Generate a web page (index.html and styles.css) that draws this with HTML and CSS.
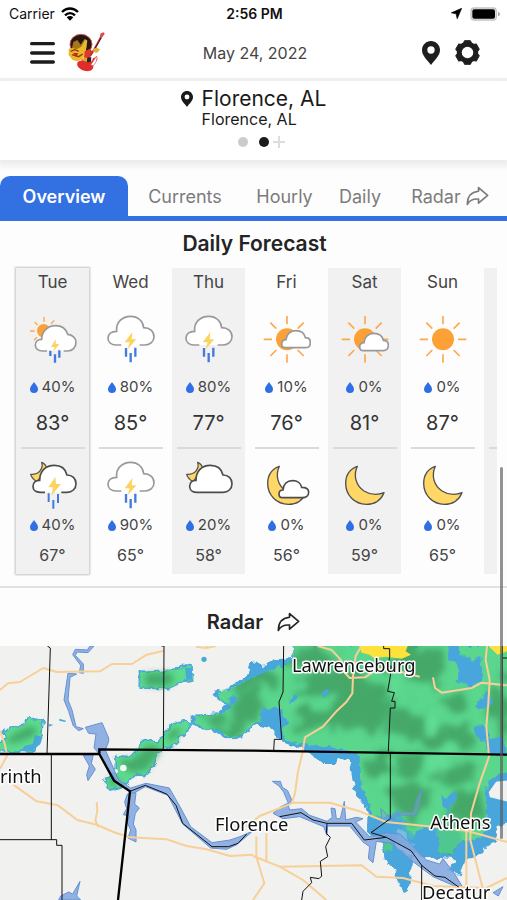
FILE: index.html
```html
<!DOCTYPE html>
<html lang="en">
<head>
<meta charset="utf-8">
<meta name="viewport" content="width=device-width, initial-scale=1">
<title>Weather</title>
<link rel="stylesheet" href="styles.css">
</head>
<body>
<svg class="defs" aria-hidden="true">
  <symbol id="drop" viewBox="0 0 24 33"><path d="M12 0C15 6 24 13 24 21a12 12 0 0 1-24 0C0 13 9 6 12 0z" fill="#2f6fe6"/></symbol>
  <symbol id="share" viewBox="0 0 68 58"><path d="M37 4 64 27 37 50V38C22 37 10 42 4 54 4 32 15 17 37 15z" fill="none" stroke="currentColor" stroke-width="5" stroke-linejoin="round"/></symbol>
  <symbol id="pin" viewBox="0 0 54 72"><path fill-rule="evenodd" d="M27 0C12 0 0 12 0 27c0 18 17 30 27 45 10-15 27-27 27-45C54 12 42 0 27 0zm0 16a11 11 0 1 1 0 22 11 11 0 0 1 0-22z" fill="currentColor"/></symbol>
  <symbol id="sun" viewBox="0 0 144 144">
    <circle cx="72" cy="73" r="33" fill="#fda136"/>
    <path d="M72 3v25M72 118v25M2 73h25M117 73h25M22 23l18 18M104 105l18 18M122 23l-18 18M40 105l-18 18" stroke="#fda850" stroke-width="5" fill="none"/>
  </symbol>
  <symbol id="sun-cloud" viewBox="0 0 144 144">
    <use href="#sun"/>
    <path d="M68 98C60 98 56 93 56 87c0-8 5-13 13-13C70 58 82 47 99 47c14 0 25 8 28 21 10 0 15 6 15 15 0 9-6 15-15 15z" fill="#fff" stroke="#999" stroke-width="5"/>
  </symbol>
  <symbol id="sun-cloud-low" viewBox="0 0 144 144">
    <use href="#sun"/>
    <path d="M68 107C60 107 56 102 56 96c0-8 5-13 13-13C70 66 82 55 99 55c14 0 25 8 28 21 10 0 15 6 15 15 0 9-6 16-15 16z" fill="#fff" stroke="#999" stroke-width="5"/>
  </symbol>
  <symbol id="storm" viewBox="0 0 144 144">
    <path d="M43 90H27C13 90 3 82 3 70 3 57 13 49 29 49 26 22 46 4 71 4c22 0 37 14 39 34 18 0 31 11 31 27 0 15-12 25-27 25H98" fill="#fff" stroke="#999" stroke-width="5"/>
    <path d="M76 51 53 82h15l-6 21 26-30H74z" fill="#fcd35f"/>
    <path d="M57 99v26M71 114v28M85 98v27" stroke="#437bdc" stroke-width="7"/>
  </symbol>
  <symbol id="sun-storm" viewBox="0 0 144 144">
    <circle cx="44" cy="47" r="20" fill="#fda136"/>
    <path d="M45 6v15M17 21l9 9M3 48h14M15 76l9-9M66 27l10-11" stroke="#fda850" stroke-width="4"/>
    <path d="M54 108H40C28 108 19 101 19 90 19 80 27 73 38 73 38 48 57 32 80 32c19 0 31 10 36 26 14 1 25 11 25 24 0 16-11 26-25 26H104" fill="#fff" stroke="#999" stroke-width="5"/>
    <path d="M80 72 66 96h11l-4 14 18-23H80z" fill="#fcd35f"/>
    <path d="M64 107v16M78 118v25M91 106v22" stroke="#437bdc" stroke-width="7"/>
  </symbol>
  <symbol id="moon-peek" viewBox="0 0 144 144">
    <path d="M38 4C44 22 30 42 5 40 8 50 14 56 24 62L54 24C51 12 46 7 38 4z" fill="#fed766" stroke="#555" stroke-width="4" stroke-linejoin="round"/>
  </symbol>
  <symbol id="moon-storm" viewBox="0 0 144 144">
    <use href="#moon-peek"/>
    <path d="M48 94H34C20 94 12 87 12 76 12 65 20 58 32 58 32 30 50 13 76 13c20 0 34 11 38 29 16 0 27 11 27 26 0 16-12 26-27 26H97" fill="#fff" stroke="#4c4c4c" stroke-width="5"/>
    <path d="M79 48 58 79h14l-5 25 29-35H81z" fill="#fcd35f"/>
    <path d="M59 97v26M73 117v26M87 99v27" stroke="#437bdc" stroke-width="6"/>
  </symbol>
  <symbol id="moon-cloudy" viewBox="0 0 144 144">
    <use href="#moon-peek"/>
    <path d="M34 94C22 94 14 87 14 76 14 65 22 58 33 58 33 30 50 13 76 13c20 0 34 11 38 29 16 0 27 11 27 26 0 16-12 26-27 26z" fill="#fff" stroke="#4c4c4c" stroke-width="5"/>
  </symbol>
  <symbol id="moon" viewBox="0 0 144 144">
    <path d="M49 16C28 22 14 42 14 67c0 36 27 63 62 63 24 0 44-13 53-35C112 102 88 102 69 90 45 74 36 44 49 16z" fill="#fed766" stroke="#505050" stroke-width="4" stroke-linejoin="round"/>
  </symbol>
  <symbol id="moon-cloud" viewBox="0 0 144 144">
    <use href="#moon"/>
    <path d="M58 110C52 110 48 105 48 99c0-7 5-12 12-12 1-17 12-28 29-28 15 0 25 9 27 20 13 0 21 6 21 15 0 10-8 16-19 16z" fill="#fff" stroke="#4c4c4c" stroke-width="5"/>
  </symbol>
</svg>

<div class="status">
  <div class="status-left"><span>Carrier</span>
    <svg class="wifi" viewBox="0 0 54 42" aria-hidden="true"><g fill="none" stroke="#000" stroke-width="7"><path d="M3 15C17 1 37 1 51 15"/><path d="M12 25c9-9 21-9 30 0"/></g><path d="M17 31c6-5 14-5 20 0L27 41z"/></svg>
  </div>
  <time class="clock">2:56 PM</time>
  <div class="status-right">
    <svg class="nav-arrow" viewBox="0 0 32 32" aria-hidden="true"><path d="M31 1 18 31 15 17 1 14z" stroke="#000" stroke-width="2"/></svg>
    <svg class="battery" viewBox="0 0 90 42" aria-hidden="true"><rect x="1" y="1" width="80" height="40" rx="12" fill="#c3c3c3"/><rect x="5" y="5" width="72" height="32" rx="8" fill="#e8e8e8"/><rect x="7" y="7" width="68" height="28" rx="6"/><path d="M84 14c8 3 8 11 0 14z" fill="#aaa"/></svg>
  </div>
</div>

<header class="header">
  <div class="header-side">
    <button class="icon-button" aria-label="Menu"><svg class="menu-icon" viewBox="0 0 75 66"><path d="M5 5h65M5 33h65M5 60h65" stroke="#1c1c1c" stroke-width="10" stroke-linecap="round"/></svg></button>
    <svg class="mascot" viewBox="0 0 111 123" aria-hidden="true">
      <ellipse cx="39" cy="37" rx="33" ry="30" fill="#241815" stroke="#d8504b" stroke-width="3"/>
      <path d="M16 30 28 24l10 14 12-18 4 10 2 16-14 10-30-8z" fill="#a8741c"/>
      <path d="M2 50l14-2 10 4 14-8 12-22 6 4-4 28 2 12-14 16-14 6-14-4-12-14z" fill="#edb72a"/>
      <path d="M8 58l12-5 12 5M12 68l20 6 12-8" fill="none" stroke="#8a3a14" stroke-width="4"/>
      <path d="M15 62l16 2-7 10z" fill="#c92220"/>
      <path d="M50 58l16-8 10 12-12 16-16 4z" fill="#e0362d"/>
      <path d="M38 82l20-6 12 10-18 14z" fill="#dca829"/>
      <path d="M58 76l12 0-2 22-12-4z" fill="#252525"/>
      <path d="M104 6 80 50 66 72" fill="none" stroke="#b83837" stroke-width="6"/>
      <path d="M99 18 82 48" fill="none" stroke="#372123" stroke-width="3"/>
      <path d="M98 4l10-3 2 5-9 11-5-6z" fill="#dc4d50"/>
      <path d="M76 51l10-4 10 5-8 10-12-1z" fill="#dfb23a"/>
      <path d="M28 92c5-8 17-9 26-3 8 4 18 2 20-8 3-6 14-8 14-2 1 8-13 15-12 24 0 13-14 17-27 13-14-4-24-14-21-24z" fill="#e12c2c"/>
      <path d="M68 99 86 72c3 10-2 20-10 29z" fill="#fff" stroke="#d8504b" stroke-width="2"/>
    </svg>
  </div>
  <time class="date" datetime="2022-05-24">May 24, 2022</time>
  <div class="header-side header-end">
    <button class="icon-button" aria-label="Locations"><svg class="pin-icon"><use href="#pin"/></svg></button>
    <button class="icon-button" aria-label="Settings"><svg class="gear-icon" viewBox="0 0 76 76"><circle cx="38" cy="38" r="25" fill="none" stroke="#1e1e1e" stroke-width="15"/><g fill="#1e1e1e" stroke="#1e1e1e" stroke-width="3" stroke-linejoin="round"><path id="tooth" d="M25 12 29 2h18l4 10z"/><use href="#tooth" transform="rotate(60 38 38)"/><use href="#tooth" transform="rotate(120 38 38)"/><use href="#tooth" transform="rotate(180 38 38)"/><use href="#tooth" transform="rotate(240 38 38)"/><use href="#tooth" transform="rotate(300 38 38)"/></g></svg></button>
  </div>
</header>

<section class="location" aria-label="Location">
  <div class="place">
    <svg class="place-pin" aria-hidden="true"><use href="#pin"/></svg>
    <h1>Florence, AL</h1>
    <p>Florence, AL</p>
  </div>
  <div class="pager">
    <span class="dot"></span><span class="dot dot-active"></span>
    <svg class="plus" viewBox="0 0 12 12" aria-hidden="true"><path d="M6 0v12M0 6h12" stroke="#ddd" stroke-width="2"/></svg>
  </div>
</section>

<nav class="tabs">
  <a class="tab tab-active" href="#overview">Overview</a>
  <a class="tab" href="#currents">Currents</a>
  <a class="tab" href="#hourly">Hourly</a>
  <a class="tab" href="#daily">Daily</a>
  <a class="tab" href="#radar">Radar <svg class="share"><use href="#share"/></svg></a>
</nav>

<main>
<section class="forecast" id="overview">
  <h2>Daily Forecast</h2>
  <div class="days">
    <article class="day day-today"><h3>Tue</h3><svg class="sky"><use href="#sun-storm"/></svg><p class="rain"><svg><use href="#drop"/></svg>40%</p><p class="high">83°</p><hr><svg class="sky sky-night"><use href="#moon-storm"/></svg><p class="rain rain-night"><svg><use href="#drop"/></svg>40%</p><p class="low">67°</p></article>
    <article class="day"><h3>Wed</h3><svg class="sky"><use href="#storm"/></svg><p class="rain"><svg><use href="#drop"/></svg>80%</p><p class="high">85°</p><hr><svg class="sky sky-night"><use href="#storm"/></svg><p class="rain rain-night"><svg><use href="#drop"/></svg>90%</p><p class="low">65°</p></article>
    <article class="day"><h3>Thu</h3><svg class="sky"><use href="#storm"/></svg><p class="rain"><svg><use href="#drop"/></svg>80%</p><p class="high">77°</p><hr><svg class="sky sky-night"><use href="#moon-cloudy"/></svg><p class="rain rain-night"><svg><use href="#drop"/></svg>20%</p><p class="low">58°</p></article>
    <article class="day"><h3>Fri</h3><svg class="sky"><use href="#sun-cloud"/></svg><p class="rain"><svg><use href="#drop"/></svg>10%</p><p class="high">76°</p><hr><svg class="sky sky-night"><use href="#moon-cloud"/></svg><p class="rain rain-night"><svg><use href="#drop"/></svg>0%</p><p class="low">56°</p></article>
    <article class="day"><h3>Sat</h3><svg class="sky"><use href="#sun-cloud-low"/></svg><p class="rain"><svg><use href="#drop"/></svg>0%</p><p class="high">81°</p><hr><svg class="sky sky-night"><use href="#moon"/></svg><p class="rain rain-night"><svg><use href="#drop"/></svg>0%</p><p class="low">59°</p></article>
    <article class="day"><h3>Sun</h3><svg class="sky"><use href="#sun"/></svg><p class="rain"><svg><use href="#drop"/></svg>0%</p><p class="high">87°</p><hr><svg class="sky sky-night"><use href="#moon"/></svg><p class="rain rain-night"><svg><use href="#drop"/></svg>0%</p><p class="low">65°</p></article>
    <article class="day day-next"><hr></article>
  </div>
</section>

<section class="radar" id="radar">
  <h2>Radar <svg class="share"><use href="#share"/></svg></h2>
  <svg class="map" viewBox="0 18 1521 762" preserveAspectRatio="xMidYMin slice" role="img" aria-label="Radar map">
    <defs>
      <filter id="soft" x="-20%" y="-20%" width="140%" height="140%">
        <feTurbulence type="fractalNoise" baseFrequency=".016" numOctaves="3" seed="4" result="noise"/>
        <feDisplacementMap in="SourceGraphic" in2="noise" scale="110" xChannelSelector="R" yChannelSelector="G"/>
        <feGaussianBlur stdDeviation="9"/>
      </filter>
      <filter id="blur" x="-30%" y="-30%" width="160%" height="160%"><feGaussianBlur stdDeviation="9"/></filter>
      <filter id="ragged" x="-5%" y="-5%" width="110%" height="110%">
        <feTurbulence type="fractalNoise" baseFrequency=".05" numOctaves="2" seed="2" result="noise"/>
        <feDisplacementMap in="SourceGraphic" in2="noise" scale="22" xChannelSelector="R" yChannelSelector="G"/>
      </filter>
      <clipPath id="green-area"><path id="green" d="M120 18 124 58 70 84 0 112-55 142-105 158-98 180-66 195-90 222-174 229-176 244-140 268-100 270-70 292-35 288 0 246 28 250 34 216 90 210 100 240 88 262 92 300 160 314 230 322 300 334 320 350 326 440 348 490 362 540 400 528 440 538 450 570 480 600 500 565 550 560 562 640 596 645 620 610 690 590 702 500 694 450 720 410 762 390V18z"/></clipPath>
    </defs>
    <rect y="18" width="1521" height="762" fill="#f1f1ef"/>

    <g fill="#5ddb8e" stroke="#49a9d8" stroke-width="5" filter="url(#ragged)">
      <path d="M418 94 520 90 546 76 576 80 578 120 545 124 510 146 418 144z"/>
      <path d="M-10 310 18 292 12 276 32 258 52 262 92 230 106 242 130 234 124 290 100 334 60 336-10 338z"/>
      <path d="M344 346 384 350 412 332 420 306 440 298 470 308 510 258 552 242 570 250 570 270 540 288 528 314 492 326 472 340 468 370 440 404 410 402 370 440 330 450 312 424 336 404 346 380z"/>
    </g>
    <path d="M105 285 128 290 122 310 98 334 64 334 74 318 98 312zM556 84l20 0 0 34-18 2z" fill="#49a9d8"/>
    <g fill="#3fa064" filter="url(#blur)" opacity=".8">
      <path d="M436 100l76-2 12 26-26 14-64 0zM20 300l24-20 44-22 26 8-16 24-34 14-36 8zM356 356l36 4 28-20 22-26 34 6 4 18-22 28-20 24-42 8-28-18zM500 284l24-20 20 4-14 24-22 14zM322 420l24-10 14 10-20 22z"/>
    </g>
    <g fill="#49a9d8"><circle cx="612" cy="58" r="8"/><path d="M178 236l20 6-2 4-18-4zM146 252l14 2-12 6z"/></g>

    <g transform="translate(759 0)">
      <path filter="url(#ragged)" d="M118 0 118 54 62 58 45 76 22 78-4 62-16 70-10 98-40 122-72 134-82 154-112 150-118 168-84 196-108 220-184 224-184 246-158 266-110 276-74 298-38 296 0 254 52 264 90 306 160 332 210 372 250 372 256 352 290 360 300 430 310 465 344 508 342 570 386 610 396 660 425 690 450 760 468 754 474 690 480 650 448 636 424 612 432 570 456 566 464 596 500 650 560 654 604 658 584 688 622 706 636 660 682 645 706 612 732 600 730 560 780 540V0z" fill="#48a6dc"/>
      <use href="#green" fill="#5ad68d" filter="url(#ragged)"/>
      <path d="M730 18h32v380h-32z" fill="#5ad68d"/>
      <g clip-path="url(#green-area)">
        <g fill="#3f9d60" filter="url(#soft)" opacity=".8">
          <ellipse cx="180" cy="50" rx="75" ry="34"/><ellipse cx="20" cy="120" rx="56" ry="28"/><ellipse cx="-20" cy="200" rx="32" ry="50"/><ellipse cx="-130" cy="240" rx="40" ry="16"/><ellipse cx="-55" cy="262" rx="35" ry="18"/>
          <ellipse cx="240" cy="130" rx="110" ry="36"/><ellipse cx="330" cy="200" rx="95" ry="75"/><ellipse cx="190" cy="240" rx="70" ry="30"/><ellipse cx="510" cy="70" rx="80" ry="60"/><ellipse cx="470" cy="250" rx="56" ry="50"/><ellipse cx="590" cy="290" rx="80" ry="34"/><ellipse cx="370" cy="372" rx="34" ry="30"/><ellipse cx="470" cy="370" rx="40" ry="26"/><ellipse cx="600" cy="400" rx="64" ry="26"/><ellipse cx="480" cy="480" rx="68" ry="50"/><ellipse cx="640" cy="500" rx="50" ry="40"/><ellipse cx="740" cy="210" rx="22" ry="80"/><ellipse cx="600" cy="180" rx="48" ry="22"/><ellipse cx="590" cy="600" rx="26" ry="24"/><ellipse cx="430" cy="70" rx="30" ry="30"/>
        </g>
        <g fill="#68e39b" filter="url(#soft)" opacity=".6"><ellipse cx="420" cy="150" rx="20" ry="44"/><ellipse cx="540" cy="240" rx="20" ry="34"/><ellipse cx="400" cy="430" rx="20" ry="44"/><ellipse cx="130" cy="190" rx="50" ry="16"/><ellipse cx="560" cy="370" rx="26" ry="30"/></g>
      </g>
      <g fill="#48a6dc" filter="url(#ragged)">
        <path d="M582 10h32l8 34 36 20 24-10 6 70-32 18-44-20 2-50-28-18zM676 184l24-30 20 30-22 22-28 2zM662 262l28-6 22 40 36-12 14 60-50 2-18-40-30-18zM560 466l24 10 20-28 12 20-24 30-4 26-18-28zM108 194l12-34 12 4-8 24zM208 150l12-6 8 14-10 18-10-8zM22 206l50-2 16 20 16 20-18 34-36-12-28-20zM-78 172l30 0 2 14-26 6z"/>
        <path d="M345 520 400 528 440 510 460 560 500 600 510 560 560 558 560 620 530 640 480 640 420 600 360 590z" opacity=".7"/>
      </g>
      <path d="M390 600l30 0-2 34-22 6zM555 560l50-20 20 60-30 46-36-8z" fill="#50c78e" filter="url(#ragged)"/>
      <path d="M318 18 326 38 350 44 362 54 400 50 446 56 474 44 458 34 464 18zM706 18h56v16l-28 10z" fill="#ffe13b"/>
      <path d="M770 418 728 422 704 456 708 474 770 490z" fill="#f1f1ef" stroke="#48a6dc" stroke-width="6"/>
    </g>
    <g fill="#f5f5f5"><circle cx="370" cy="384" r="10"/><circle cx="348" cy="394" r="6"/><path d="M392 424l22-16 16 4-10 18z"/></g>

    <g fill="#7fa6de" stroke="#6590d3" stroke-width="3" fill-opacity=".85">
      <path d="M282 18 264 38 232 36 226 46 250 72 250 100 238 98 242 76 218 44 226 28 262 30 270 18z"/>
      <path d="M204 100 230 102 210 112 204 180 216 210 228 260 250 266 236 272 220 258 206 214 192 180z"/>
      <path d="M256 262 306 248 326 294 326 304 316 330 356 420 392 444 438 430 508 444 540 500 572 560 636 608 690 600 720 590 760 572 710 614 680 628 632 624 548 552 504 466 436 440 400 460 352 430 296 340 282 324 288 282 266 280z"/>
      <path d="M250 346 280 344 274 370 286 388 264 422 260 404 268 378z"/>
      <path d="M382 462 408 458 404 492 418 504 406 520 400 552 408 570 408 606 384 594 392 570 382 548 388 528 370 524 380 506 374 486z"/>
      <path d="M176 780 182 768 206 756 218 762 240 724 230 768 242 780z"/>
      <g transform="translate(759 0)">
        <path d="M58 424 82 424 88 442 104 452 116 480 108 494 92 456 78 438z"/>
        <path d="M60 520 84 500 104 490 110 510 146 506 170 526 222 544 238 532 234 504 246 506 250 536 262 536 274 484 278 540 310 532 330 536 308 546 350 590 400 578 440 582 474 612 520 660 560 672 570 656 604 700 628 740 600 736 540 710 500 680 460 650 420 610 370 604 360 668 346 656 350 620 330 606 290 558 224 558 222 586 212 560 140 530 90 536z"/>
        <path d="M384 506 386 540 354 578 410 538 440 524 486 528 500 500 506 448 490 480 482 516 440 518 410 532z" fill-opacity=".35"/>
        <path d="M720 758l30-18-14 28z"/>
      </g>
    </g>

    <g fill="none" stroke="#f7cf97" stroke-width="6" stroke-linejoin="round">
      <path d="M0 150 24 130 60 126 130 84 170 96 300 94 336 72 396 72 440 44 492 32"/>
      <path d="M40 434 110 484 174 496 232 540 290 554 340 576 390 592 500 598 560 618 620 628 690 648 759 644"/>
      <path d="M290 486l2 26-6 30 10 20M0 272l14 40 8 34-22 40"/>
      <path d="M588 20l30 4 30-6M620 18v6"/>
      <g transform="translate(759 0)">
        <path d="M194 18 236 30 266 62 270 92 290 114 336 112 354 100 374 86 430 92 500 110M324 20 308 48 300 110 298 160 280 186 252 212 210 260 156 292 148 340 134 400 126 460 116 490 20 528-20 560"/>
        <path d="M116 488 230 488 320 514 400 546 540 560 640 572 690 586 762 606"/>
        <path d="M702 18 698 60 710 120 706 190 700 260 708 350 680 430 654 520 652 600 688 740M540 112l6 32 20 14 90-14 30-16 76 8M640 572v170"/>
        <path d="M10 590V650L34 730 0 780M40 580 40 662M0 648 80 680 150 720 220 780M80 680 326 676 370 710 450 714 540 738 700 744 762 714"/>
      </g>
    </g>

    <g fill="none" stroke="#111" stroke-width="3" stroke-linejoin="round">
      <path d="M142 18l9 6-10 318M484 18h8l-2 310M154 344V600M0 599H170V616H186V780"/>
      <path d="M390 454 436 436 500 462 528 496 548 550 636 620 686 620 714 610 740 582"/>
      <g transform="translate(759 0)">
        <path d="M92 18 90 156 78 186 86 298H64L62 332M392 18v8h18v26l-6 26 10 0-2 30-8 46 20 4-8 26 10 0v20l-14 0-6 130M412 338V536L354 578 400 592 474 632 506 676 546 708 576 712 618 742M506 676v104"/>
        <path d="M80 530 144 518 180 540 222 550 296 550 334 600 400 592M222 550l-2 30 12 12-14 28 6 30-22 14 4 44-8 8-26-4 4 16-26 26-4 26M748 18v36h14M748 54v290"/>
      </g>
    </g>
    <path d="M0 342H298V328L759 332 1521 344M298 342 342 422 390 454 354 780" fill="none" stroke="#000" stroke-width="7"/>

    <g class="labels">
      <text x="0" y="430">rinth</text>
      <text x="645" y="574">Florence</text>
      <text x="876" y="97">Lawrenceburg</text>
      <text x="1291" y="568">Athens</text>
      <text x="1266" y="776">Decatur</text>
    </g>
  </svg>
</section>
</main>
<div class="scroll-thumb"></div>
</body>
</html>
```
FILE: styles.css
```css
* { box-sizing: border-box; }

html, body { height: 100%; }

body {
  margin: 0;
  display: flex;
  flex-direction: column;
  overflow: hidden;
  background: #fdfdfd;
  color: #2c2c2c;
  font-family: Inter, "Liberation Sans", sans-serif;
}

h1, h2, h3, p { margin: 0; font-weight: 400; }
svg { display: block; flex: none; }
.defs { position: absolute; width: 0; height: 0; }

.status {
  display: grid;
  grid-template-columns: 1fr auto 1fr;
  align-items: center;
  height: 27px;
  padding: 0 7px 0 9px;
  background: #fff;
  color: #111;
  font-size: 14px;
}
.status-left, .status-right { display: flex; align-items: center; gap: 6px; }
.status-right { justify-content: flex-end; gap: 8px; }
.clock { font-weight: 600; }
.wifi { width: 18px; height: 14px; }
.nav-arrow { width: 11px; height: 11px; }
.battery { width: 30px; height: 14px; }

.header {
  display: grid;
  grid-template-columns: 1fr auto 1fr;
  align-items: center;
  height: 54px;
  padding: 0 27px 0 30px;
  border-bottom: 3px solid #f0f0f0;
  background: #fff;
}
.header-side { display: flex; align-items: center; gap: 13px; }
.header-end { justify-content: flex-end; gap: 15px; }
.date { font-size: 16px; color: #444; }
.icon-button { padding: 0; border: 0; background: none; color: #1e1e1e; }
.menu-icon { width: 25px; height: 22px; }
.mascot { width: 37px; height: 41px; }
.pin-icon { width: 18px; height: 24px; }
.gear-icon { width: 25px; height: 25px; }

.location {
  padding: 5px 0 12px;
  background: #fff;
  box-shadow: 0 3px 6px 3px #ececec;
}
.place {
  display: grid;
  grid-template-columns: 12px auto;
  justify-content: center;
  align-items: center;
  column-gap: 9px;
  color: #1a1a1a;
}
.place-pin { width: 12px; height: 16px; }
.place h1 { font-size: 21px; line-height: 26px; }
.place p { grid-column: 2; font-size: 16px; line-height: 14px; }
.pager { display: flex; justify-content: center; align-items: center; gap: 11px; height: 12px; margin-top: 10px; padding-left: 16px; }
.dot { width: 10px; height: 10px; border-radius: 50%; background: #ccc; }
.dot-active { background: #1c1c1c; }
.plus { width: 12px; height: 12px; margin-left: -7px; }

.tabs {
  display: grid;
  grid-template-columns: 128fr 114fr 85fr 66fr 114fr;
  margin-top: 16px;
  border-bottom: 5px solid #3370e2;
}
.tab {
  display: flex;
  align-items: center;
  justify-content: center;
  gap: 5px;
  height: 40px;
  color: #7c7c7c;
  font-size: 18px;
  text-decoration: none;
}
.tab-active { border-radius: 10px 10px 0 0; background: #3370e2; color: #fff; font-weight: 600; }
.tab .share { width: 23px; height: 20px; }

main { display: flex; flex-direction: column; flex: 1; min-height: 0; }

h2 { font-size: 21px; font-weight: 600; line-height: 26px; color: #242424; text-align: center; }
.forecast { padding: 10px 10px 12px 12px; border-bottom: 2px solid #e2e2e2; }
.days { display: flex; gap: 5px; margin: 9px 0 -2px; padding: 2px 0 2px 4px; overflow: hidden; }
.day {
  display: flex;
  flex: 0 0 73px;
  flex-direction: column;
  align-items: center;
  padding-bottom: 9px;
}
.day:nth-child(odd) { background: #f1f1f1; }
.day-today { box-shadow: 0 0 2px 1px #c4c4c4; }
.day h3 { font-size: 17px; line-height: 28px; color: #444; }
.sky { width: 48px; height: 48px; margin-top: 19px; }
.sky-night { margin-top: 12px; }
.rain { display: flex; align-items: center; gap: 4px; margin-top: 14px; font-size: 15px; line-height: 20px; color: #444; }
.rain-night { margin-top: 6px; }
.rain svg { width: 8px; height: 11px; }
.high { margin-top: 12px; font-size: 20px; line-height: 28px; color: #333; }
.low { margin-top: 10px; font-size: 16px; line-height: 20px; color: #444; }
.day hr { width: 64px; height: 2px; margin: 10px 0 0; border: 0; background: #dadada; }
.day-next hr { margin-top: 179px; }

.radar { display: flex; flex-direction: column; flex: 1; min-height: 0; }
.radar h2 { display: flex; align-items: center; justify-content: center; gap: 14px; padding: 21px 0 11px; font-size: 20px; }
.radar .share { width: 23px; height: 20px; }
.map { flex: 1; width: 100%; min-height: 0; }
.labels {
  fill: #111;
  stroke: #fff;
  stroke-width: 9px;
  stroke-linejoin: round;
  paint-order: stroke;
  font: 55px "Noto Sans", "Open Sans", sans-serif;
}

.scroll-thumb {
  position: absolute;
  top: 467px;
  right: 4px;
  width: 3px;
  height: 372px;
  border-radius: 2px;
  background: rgba(90, 90, 90, .65);
}
```
